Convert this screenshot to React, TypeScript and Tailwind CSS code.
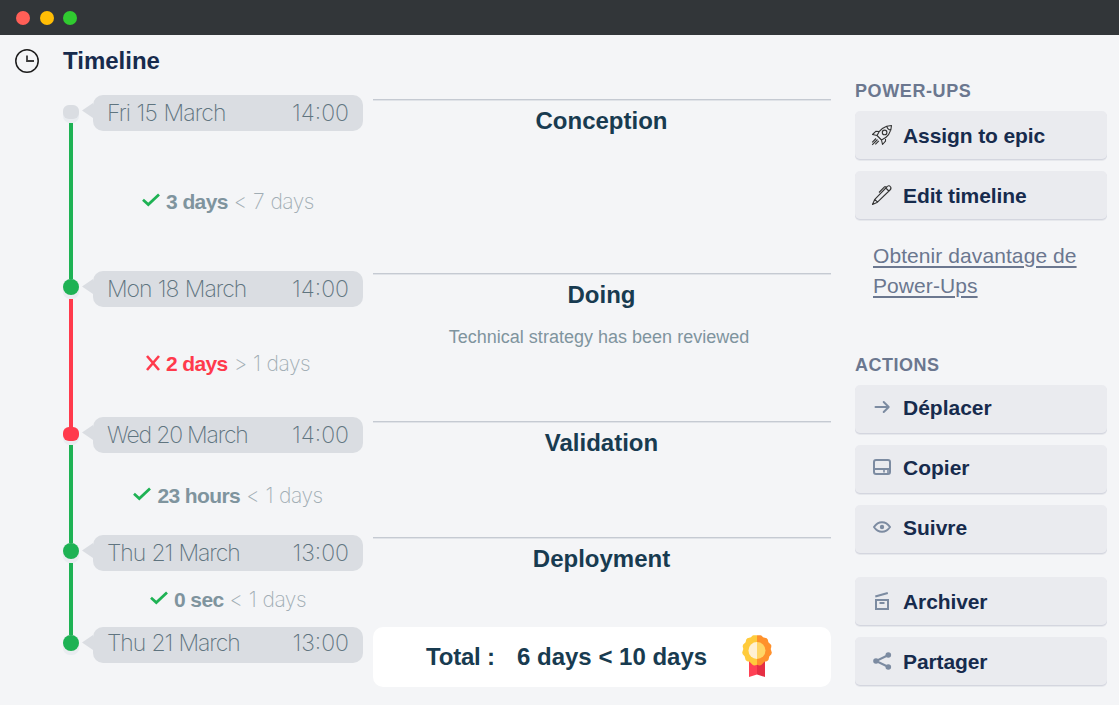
import type { ReactNode } from "react";

const GREEN = "bg-[#1eb254]";
const RED = "bg-[#ff3a4c]";

function Check() {
  return (
    <svg width="18" height="14" viewBox="0 0 18 14" fill="none" className="-mt-1 shrink-0">
      <path d="M1 6.800 L6.300 11.600 L17 1.400" stroke="#1eb254" strokeWidth="2.700" />
    </svg>
  );
}

function Cross() {
  return (
    <svg width="14" height="16" viewBox="0 0 14 16" fill="none" className="-mt-[2px] shrink-0">
      <path d="M1 1 L13 15 M13 1 L1 15" stroke="#ff3a4c" strokeWidth="2.600" />
    </svg>
  );
}

type Step = {
  date: string;
  time: string;
  height: string;
  dot: string;
  tracking: string;
  line?: string;
  label?: string;
  spent?: string;
  limit?: string;
  late?: boolean;
  offset?: string;
};

const steps: Step[] = [
  { date: "Fri 15 March", time: "14:00", height: "h-[176px]", tracking: "tracking-[-0.900px] [word-spacing:1px]", dot: "h-[14px] rounded-[6px] bg-[#dadde2]", line: GREEN, spent: "3 days", limit: "< 7 days", offset: "pt-[2px]" },
  { date: "Mon 18 March", time: "14:00", height: "h-[146px]", tracking: "tracking-[-1.050px] [word-spacing:1px]", dot: "h-4 rounded-full bg-[#1eb254]", line: RED, spent: "2 days", limit: "> 1 days", late: true, offset: "pt-1" },
  { date: "Wed 20 March", time: "14:00", height: "h-[118px]", tracking: "tracking-[-1.200px]", dot: "h-[14px] rounded-[6px] bg-[#ff3a4c]", line: GREEN, spent: "23 hours", limit: "< 1 days", offset: "pt-1" },
  { date: "Thu 21 March", time: "13:00", height: "h-[92px]", tracking: "tracking-[-1.100px] [word-spacing:1px]", dot: "h-4 rounded-full bg-[#1eb254]", line: GREEN, spent: "0 sec", limit: "< 1 days", offset: "pt-[2px]" },
  { date: "Thu 21 March", time: "13:00", height: "h-[36px]", tracking: "tracking-[-1.100px] [word-spacing:1px]", dot: "h-4 rounded-full bg-[#1eb254]", label: "-mt-1" },
];

function TimelineStep({ step }: { step: Step }) {
  return (
    <div className={`flex ${step.height}`}>
      <div className="flex w-4 flex-col items-center pt-2">
        <div className="z-10 flex h-5 w-4 shrink-0 flex-col justify-end">
          <div className="rounded-[7px] bg-[#e9ecf0] pb-1">
            <div className={`w-4 ${step.dot}`} />
          </div>
        </div>
        {step.line && <div className={`-mb-3 w-1 flex-1 ${step.line}`} />}
      </div>
      <svg width="14" height="36" viewBox="0 0 14 36" className="shrink-0">
        <path d="M3 15.500 L14 8 V23 Z" fill="#dadde2" />
      </svg>
      <div className="flex w-[270px] flex-col">
        <div className="flex h-9 shrink-0 items-center justify-between rounded-[10px] bg-[#dadde2] px-[14px] font-[Inter,sans-serif] text-[23px] font-extralight text-[#5f747f]">
          <span className={`${step.tracking} ${step.label ?? ""}`}>{step.date}</span>
          <span className={step.label}>{step.time}</span>
        </div>
        {step.spent && (
          <div className={`flex flex-1 items-center justify-center text-[21px] ${step.offset}`}>
            {step.late ? <Cross /> : <Check />}
            <span className={`ml-[6px] font-bold tracking-[-0.600px] ${step.late ? "text-[#ff3a4c]" : "text-[#7f949e]"}`}>{step.spent}</span>
            <span className="ml-[6px] font-[Inter,sans-serif] font-extralight tracking-[-0.500px] text-[#a1adb4] [word-spacing:0.800px]">{step.limit}</span>
          </div>
        )}
      </div>
    </div>
  );
}

function Stage({ name, height, note }: { name: string; height: string; note?: string }) {
  return (
    <section className={`border-t border-[#c5cad2] pt-[7px] text-center shadow-[inset_0_1px_0_#e0e3e8] ${height}`}>
      <h2 className="pr-px text-2xl leading-7 font-bold text-[#183b50]">{name}</h2>
      {note && <p className="mt-[14px] pr-[6px] text-[18px] leading-7 tracking-[0.010px] text-[#7f949e]">{note}</p>}
    </section>
  );
}

function Medal() {
  return (
    <svg width="32" height="44" viewBox="0 0 32 44" className="-mt-[2px]">
      <path d="M8 25h8v15.500L8 43z" fill="#ff4155" />
      <path d="M16 25h8v18l-8-2.500z" fill="#e62f44" />
      <path d="M16 1.300 H12.500 Q11.300 1.300 10 3.200 L6.300 4.300 Q5 5 4.600 8.200 L2 10.800 Q1.200 12 2.300 15 L1.200 18.500 Q1 20.200 3.600 22.300 L4.600 26 Q5.600 27.600 8.600 27.800 L11.500 30.800 Q13 32 16 30.800 Z" fill="#ffcb3c" />
      <path d="M16 1.300 H19.500 Q20.700 1.300 22 3.200 L25.700 4.300 Q27 5 27.400 8.200 L30 10.800 Q30.800 12 29.700 15 L30.800 18.500 Q31 20.200 28.400 22.300 L27.400 26 Q26.400 27.600 23.400 27.800 L20.500 30.800 Q19 32 16 30.800 Z" fill="#ff912c" />
      <path d="M16 8a8.500 8.500 0 0 0 0 17z" fill="#fff0d4" />
      <path d="M16 8a8.500 8.500 0 0 1 0 17z" fill="#ffd566" />
    </svg>
  );
}

function ActionButton({ icon, children, raised }: { icon: ReactNode; children: ReactNode; raised?: boolean }) {
  return (
    <button className={`flex h-12 w-[252px] rounded-[5px] bg-[#eaebef] pl-4 text-left text-[21px] font-bold text-[#172b4d] shadow-[0_1px_0_#d4d6df,0_2px_0_#e6e8ec] ${raised ? "leading-[46px]" : "leading-[50px] tracking-[-0.100px]"}`}>
      <span className={`flex w-8 items-center ${raised ? "h-[44px]" : "h-12"}`}>{icon}</span>
      <span>{children}</span>
    </button>
  );
}

function Rocket() {
  return (
    <svg width="22" height="22" viewBox="0 0 22 22" fill="none" stroke="#333" strokeWidth="1.100" strokeLinejoin="round">
      <path d="M6 11.500 C8 6 13.500 1.500 20.500 1.500 C20.500 8.500 16 14 10.500 16 Z M15.800 1.900 C16 4 18 6 20.200 6.300 M8.200 7.500 L4.800 7.300 L1.500 10.500 L6 11.500 L10.500 16 L11.500 20.500 L14.500 17.200 L14.500 13.500 M5 14.500 L1.200 18.300 M6.500 15.500 L1.200 20.800 M7.800 16.800 L4.300 20.300" />
      <circle cx="13.600" cy="8.400" r="2.300" />
    </svg>
  );
}

function Pen() {
  return (
    <svg width="22" height="22" viewBox="0 0 22 22" fill="none" stroke="#333" strokeWidth="1.100" strokeLinejoin="round">
      <path d="M1.500 20.500 L3.800 15.300 L15.800 3 C17 1.500 18.500 1.500 19.300 2.500 C20.200 3.500 20.200 4.800 19 6 L6.500 18.200 Z M3.800 15.300 L6.500 18.200 M14.800 4 L17.800 7 M15.500 2.700 L13.500 2.800 L8 8.500" />
    </svg>
  );
}

function Arrow() {
  return (
    <svg width="22" height="22" viewBox="0 0 22 22" fill="none" stroke="#7c8ba1" strokeWidth="2" strokeLinecap="round" strokeLinejoin="round">
      <path d="M4.500 11 H17.500 M12.700 6 L17.700 11 L12.700 16" />
    </svg>
  );
}

function Card() {
  return (
    <svg width="22" height="22" viewBox="0 0 22 22" fill="none" stroke="#7c8ba1" strokeWidth="2">
      <rect x="3" y="4" width="16" height="14" rx="2" />
      <path d="M3 13 H19" />
      <path d="M13 14 V16.500 M17 14 V18" strokeWidth="1.600" />
    </svg>
  );
}

function Eye() {
  return (
    <svg width="22" height="22" viewBox="0 0 22 22" fill="none" stroke="#7c8ba1" strokeWidth="2">
      <path d="M3 11 C5.500 7.300 8.300 6.200 11 6.200 S16.500 7.300 19 11 C16.500 14.700 13.700 15.800 11 15.800 S5.500 14.700 3 11 Z" strokeLinejoin="round" />
      <circle cx="11" cy="11" r="2.200" fill="#7c8ba1" stroke="none" />
    </svg>
  );
}

function Archive() {
  return (
    <svg width="22" height="22" viewBox="0 0 22 22" fill="none" stroke="#7c8ba1" strokeWidth="2">
      <path d="M5 10 H17 V19 H5 Z M8.500 13 H13.500 M4.300 6.500 L16.800 3" />
    </svg>
  );
}

function Share() {
  return (
    <svg width="22" height="22" viewBox="0 0 22 22" fill="#7c8ba1">
      <path d="M17.500 5 L5 11 L17.500 17" fill="none" stroke="#7c8ba1" strokeWidth="2" />
      <circle cx="17.300" cy="5" r="2.800" />
      <circle cx="5" cy="11" r="2.800" />
      <circle cx="17.300" cy="17" r="2.800" />
    </svg>
  );
}

export default function App() {
  return (
    <div className="h-[705px] w-[1119px] overflow-hidden bg-[#f4f5f7] font-['Liberation_Sans',sans-serif]">
      <div className="flex h-[35px] items-center gap-[9.500px] bg-[#323639] pl-4">
        <span className="size-[14px] rounded-full bg-[#ff5f57]" />
        <span className="size-[14px] rounded-full bg-[#ffbd05]" />
        <span className="size-[14px] rounded-full bg-[#30cb30]" />
      </div>
      <div className="flex h-[670px]">
        <div className="w-[373px]">
          <header className="flex h-[60px] pt-3">
            <svg width="24" height="24" viewBox="0 0 24 24" fill="none" className="mt-[2px] ml-[15px]">
              <circle cx="12" cy="12" r="11.200" stroke="#1c1c1c" strokeWidth="1.500" />
              <path d="M12 6.500 V12 H19" stroke="#3a3a3a" strokeWidth="1.800" />
            </svg>
            <h1 className="ml-6 text-2xl leading-7 font-bold text-[#172b4d]">Timeline</h1>
          </header>
          <div className="pl-[63px]">
            {steps.map((step, i) => (
              <TimelineStep key={i} step={step} />
            ))}
          </div>
        </div>
        <div className="w-[458px] pt-16">
          <Stage name="Conception" height="h-[174px]" />
          <Stage name="Doing" height="h-[148px]" note="Technical strategy has been reviewed" />
          <Stage name="Validation" height="h-[116px]" />
          <Stage name="Deployment" height="h-[90px]" />
          <div className="flex h-[60px] items-center rounded-[10px] bg-white pl-[53px] text-2xl font-bold text-[#183b50]">
            <span className="w-[91px] tracking-[-0.200px]">Total :</span>
            <span className="w-[224px]">6 days &lt; 10 days</span>
            <Medal />
          </div>
        </div>
        <aside className="pt-[45px] pl-6">
          <h3 className="h-[31px] text-[18px] leading-[22px] font-bold tracking-[0.600px] text-[#6b778f]">POWER-UPS</h3>
          <div className="flex flex-col gap-3">
            <ActionButton icon={<Rocket />}>Assign to epic</ActionButton>
            <ActionButton icon={<Pen />}>Edit timeline</ActionButton>
          </div>
          <a className="mt-[22px] ml-[18px] block w-[220px] text-[21px] leading-[30px] tracking-[0.080px] text-[#6b778f] underline decoration-2 underline-offset-3">
            Obtenir davantage de Power-Ups
          </a>
          <h3 className="mt-[53px] h-[31px] text-[18px] leading-[22px] font-bold tracking-[0.500px] text-[#6b778f]">ACTIONS</h3>
          <div className="flex flex-col gap-3">
            <ActionButton raised icon={<Arrow />}>Déplacer</ActionButton>
            <ActionButton raised icon={<Card />}>Copier</ActionButton>
            <ActionButton raised icon={<Eye />}>Suivre</ActionButton>
          </div>
          <div className="mt-6 flex flex-col gap-3">
            <ActionButton icon={<Archive />}>Archiver</ActionButton>
            <ActionButton icon={<Share />}>Partager</ActionButton>
          </div>
        </aside>
      </div>
    </div>
  );
}
